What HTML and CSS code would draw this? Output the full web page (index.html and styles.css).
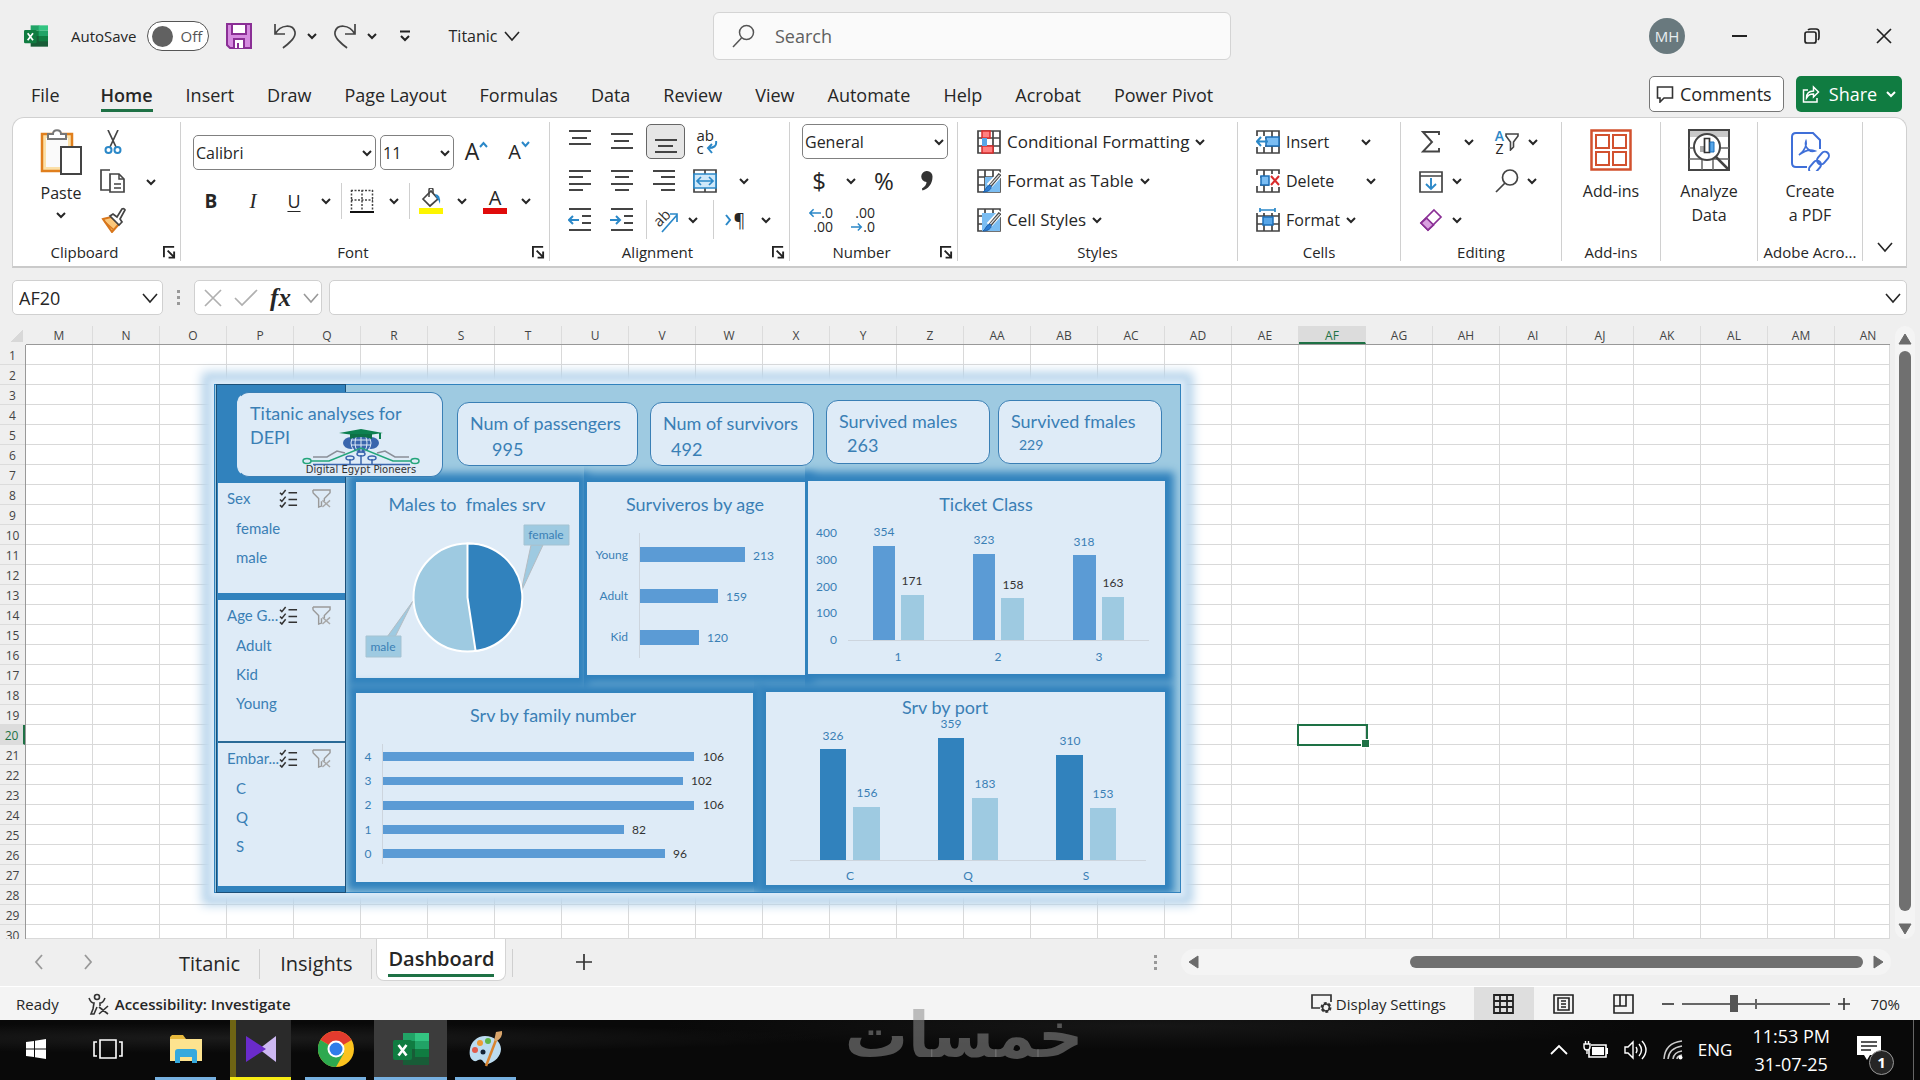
FILE: index.html
```html
<!DOCTYPE html>
<html lang="en">
<head>
<meta charset="utf-8">
<title>Titanic - Excel</title>
<link rel="stylesheet" href="styles.css">
</head>
<body>
<svg class="defs" aria-hidden="true">
  <symbol id="chev" viewBox="0 0 10 10"><path d="M1 3l4 4 4-4" fill="none" stroke="currentColor" stroke-width="2"/></symbol>
  <symbol id="chev-lg" viewBox="0 0 16 16"><path d="M1 4l7 8 7-8" fill="none" stroke="currentColor" stroke-width="1.600"/></symbol>
  <symbol id="launch" viewBox="0 0 14 14"><path d="M1 12V1h11M5 5l7 7M12 6v6.500H6" fill="none" stroke="#222" stroke-width="2"/></symbol>
  <symbol id="excel" viewBox="0 0 36 36">
    <path d="M10 2h13v8H10z" fill="#21a366"/><path d="M22 2h14v8H22z" fill="#33c481"/><path d="M10 10h13v8H10z" fill="#107c41"/><path d="M22 10h14v8H22z" fill="#21a366"/><path d="M10 18h26v16H10z" fill="#185c37"/><path d="M22 18h14v8H22z" fill="#107c41"/>
    <rect y="9" width="19" height="20" rx="2" fill="#107c41"/><path d="M5.500 14l8 10.500M13.500 14l-8 10.500" stroke="#fff" stroke-width="2.600"/>
  </symbol>
  <symbol id="multi" viewBox="0 0 20 20"><path d="M1 4l2 2 4-5M1 11l2 2 4-5M1 17l2 2 4-5M10 4h9M10 11h9M10 17h9" fill="none" stroke="#333" stroke-width="1.600"/></symbol>
  <symbol id="nofilter" viewBox="0 0 20 20"><path d="M1 1h18v3l-6 6v3M1 4l6 6v9l3-1v-5M1 1v3" fill="none" stroke="#9a9a9a" stroke-width="1.500"/><path d="M11 12l8 7M19 12l-8 7" stroke="#a8a8a8" stroke-width="1.500"/></symbol>
  <symbol id="gridico" viewBox="0 0 24 24"><path d="M1 1h22v22H1zM1 8h22M1 16h22M8 1v22M16 1v22" fill="#fff" stroke="#444" stroke-width="1.700"/></symbol>
  <symbol id="brushpen" viewBox="0 0 24 24"><path d="M24 4L12 17" stroke="#fff" stroke-width="6"/><path d="M23 5L13 17" stroke="#444" stroke-width="3.500"/><path d="M22.500 6L13 16.500" stroke="#ddd" stroke-width="1.200"/><path d="M13 16c3 2 0 7-7 7 3-2 3-6 7-7z" fill="#2b7cd3" stroke="#1c5fa8"/></symbol>
</svg>

<header class="titlebar">
  <div class="quick">
    <svg class="logo24" viewBox="0 0 36 36"><use href="#excel"/></svg>
    <label class="autosave"><span>AutoSave</span><input type="checkbox" class="switch-input"><span class="switch"><i></i>Off</span></label>
    <button class="plain save" aria-label="Save"><svg width="26" height="26" viewBox="0 0 26 26"><path d="M1 1h24v24H4l-3-3z" fill="#d68be0" stroke="#8a2f95" stroke-width="2"/><path d="M6 1h14v10H6zM8 25v-9h10v9" fill="#fff" stroke="#8a2f95" stroke-width="2"/><path d="M12 20v5" stroke="#8a2f95" stroke-width="2"/></svg></button>
    <button class="plain undo" aria-label="Undo"><svg width="24" height="26" viewBox="0 0 24 26"><path d="M2 1v10h10M2 11C8 1 20 1 22 9c1 6-6 11-12 16" fill="none" stroke="#444" stroke-width="1.700"/></svg></button>
    <button class="plain chv" aria-label="Undo list"><svg class="c"><use href="#chev"/></svg></button>
    <button class="plain undo" aria-label="Redo"><svg width="24" height="26" viewBox="0 0 24 26"><path d="M22 1v10H12M22 11C16 1 4 1 2 9c-1 6 6 11 12 16" fill="none" stroke="#444" stroke-width="1.700"/></svg></button>
    <button class="plain chv" aria-label="Redo list"><svg class="c"><use href="#chev"/></svg></button>
    <button class="plain custom" aria-label="Customize toolbar"><svg width="12" height="12" viewBox="0 0 12 12"><path d="M1 1.500h10M2 6l4 4 4-4" fill="none" stroke="#222" stroke-width="2"/></svg></button>
    <button class="plain doc">Titanic<svg class="cl"><use href="#chev-lg"/></svg></button>
  </div>
  <label class="search"><svg width="24" height="24" viewBox="0 0 24 24"><circle cx="14.500" cy="8.500" r="7" fill="none" stroke="#555" stroke-width="1.500"/><path d="M9.500 14L1 23" stroke="#555" stroke-width="1.500"/></svg><input type="text" placeholder="Search" aria-label="Search"></label>
  <div class="winctl">
    <span class="avatar">MH</span>
    <button class="plain" aria-label="Minimize"><svg width="18" height="18" viewBox="0 0 18 18"><path d="M1 9h15" stroke="#222" stroke-width="2"/></svg></button>
    <button class="plain" aria-label="Restore"><svg width="18" height="18" viewBox="0 0 18 18"><rect x="2" y="5" width="11" height="11" rx="2" fill="none" stroke="#222" stroke-width="1.700"/><path d="M5 3q1-1 3-1h5q3 0 3 3v5q0 2-1 3" fill="none" stroke="#222" stroke-width="1.700"/></svg></button>
    <button class="plain" aria-label="Close"><svg width="18" height="18" viewBox="0 0 18 18"><path d="M2 2l14 14M16 2L2 16" stroke="#222" stroke-width="1.700"/></svg></button>
  </div>
</header>

<nav class="tabs">
  <a href="#">File</a><a href="#" class="on">Home</a><a href="#">Insert</a><a href="#">Draw</a><a href="#">Page Layout</a><a href="#">Formulas</a><a href="#">Data</a><a href="#">Review</a><a href="#">View</a><a href="#">Automate</a><a href="#">Help</a><a href="#">Acrobat</a><a href="#">Power Pivot</a>
  <button class="comments"><svg width="18" height="18" viewBox="0 0 18 18"><path d="M1.500 2h15v11H8l-4 4v-4H1.500z" fill="none" stroke="#333" stroke-width="1.600"/></svg>Comments</button>
  <button class="share"><svg width="18" height="18" viewBox="0 0 18 18"><path d="M6 5H1.500v12H15v-4M4.500 13c0-5 2-7 7-7V2l5 5-5 5V9c-4 0-5 1-7 4z" fill="none" stroke="#fff" stroke-width="1.500"/></svg>Share<svg class="c"><use href="#chev"/></svg></button>
</nav>

<section class="ribbon">
  <div class="grp g-clip">
    <div class="body">
      <button class="plain paste"><svg width="42" height="46" viewBox="0 0 42 46"><path d="M2 5h30v37H2z" fill="#fbe0a8" stroke="#e07f1d" stroke-width="2.500"/><path d="M6 9h22v29H6z" fill="#fafafa"/><path d="M8 10V5h5c0-5 8-5 8 0h5v5z" fill="#fff" stroke="#777" stroke-width="2"/><path d="M21 18h20v27H21z" fill="#fff" stroke="#444" stroke-width="2"/></svg><span>Paste</span><svg class="c"><use href="#chev"/></svg></button>
      <div class="col">
        <button class="plain r" aria-label="Cut"><svg width="18" height="24" viewBox="0 0 18 24"><path d="M4 0l8 17M14 0L6 17" stroke="#444" stroke-width="1.700"/><g fill="none" stroke="#2b88c8" stroke-width="2"><circle cx="4.500" cy="20" r="3"/><circle cx="13.500" cy="20" r="3"/></g></svg></button>
        <button class="plain r" aria-label="Copy"><svg width="26" height="26" viewBox="0 0 26 26"><path d="M10 22H1V2h9" fill="none" stroke="#444" stroke-width="1.700"/><path d="M10 6h9l5 5v13H10z" fill="#fff" stroke="#444" stroke-width="1.700"/><path d="M19 6v5h5M14 16h7M14 20h7" fill="none" stroke="#444" stroke-width="1.500"/></svg></button>
        <button class="plain r" aria-label="Format Painter"><svg width="26" height="26" viewBox="0 0 26 26"><path d="M3 12l8-2 8 7-7 8z" fill="#fbc77a" stroke="#d8761b" stroke-width="2"/><path d="M5 15l9 8" stroke="#d8761b" stroke-width="1.500"/><path d="M10 9l3-2 4 3 5-8q2-1 3 1l-5 9 2 3-3 3z" fill="#fff" stroke="#444" stroke-width="1.700"/></svg></button>
      </div>
      <button class="plain chvmid" aria-label="Copy options"><svg class="c"><use href="#chev"/></svg></button>
    </div>
    <div class="lab">Clipboard<svg class="l"><use href="#launch"/></svg></div>
  </div>

  <div class="grp g-font">
    <div class="body stack">
      <div class="frow1">
        <label class="combo cf"><input type="text" value="Calibri" aria-label="Font"><svg class="c"><use href="#chev"/></svg></label>
        <label class="combo cs"><input type="text" value="11" aria-label="Font size"><svg class="c"><use href="#chev"/></svg></label>
        <button class="plain big">A<svg width="9" height="9" viewBox="0 0 9 9"><path d="M1 7l3.500-4L8 7" fill="none" stroke="#2b88c8" stroke-width="2"/></svg></button>
        <button class="plain big sm">A<svg width="9" height="9" viewBox="0 0 9 9"><path d="M1 2l3.500 4L8 2" fill="none" stroke="#2b88c8" stroke-width="2"/></svg></button>
      </div>
      <div class="frow2">
        <button class="plain b">B</button><button class="plain i">I</button><button class="plain u">U</button>
        <button class="plain" aria-label="Underline options"><svg class="c"><use href="#chev"/></svg></button><i class="vs"></i>
        <button class="plain" aria-label="Borders"><svg width="24" height="24" viewBox="0 0 24 24"><path d="M1 1.500h22M1.500 1v20M22.500 1v20M12 1v20M1 11h22" stroke="#444" stroke-width="1.500" stroke-dasharray="2 1.500" fill="none"/><path d="M0 23h24" stroke="#111" stroke-width="2"/></svg></button>
        <button class="plain" aria-label="Border options"><svg class="c"><use href="#chev"/></svg></button><i class="vs e"></i>
        <button class="plain" aria-label="Fill color"><svg width="24" height="26" viewBox="0 0 24 26"><path d="M4 11l8-8 7 8-8 7z" fill="#fff" stroke="#444" stroke-width="1.700"/><path d="M10 9V2q0-2 2-2t2 2v3" fill="none" stroke="#444" stroke-width="1.500"/><path d="M16 6q6 0 5 10-1-4-4-7z" fill="#2b88c8"/><path d="M0 20h24v6H0z" fill="#fdf500"/></svg></button>
        <button class="plain" aria-label="Fill options"><svg class="c"><use href="#chev"/></svg></button>
        <button class="plain fc">A</button>
        <button class="plain" aria-label="Font color options"><svg class="c"><use href="#chev"/></svg></button>
      </div>
    </div>
    <div class="lab">Font<svg class="l"><use href="#launch"/></svg></div>
  </div>

  <div class="grp g-align">
    <div class="body stack">
      <div class="row a1">
        <button class="plain" aria-label="Top align"><svg class="i24" viewBox="0 0 24 24"><path d="M1 1h22M4 8h15M1 14h22"/></svg></button>
        <button class="plain" aria-label="Middle align"><svg class="i24" viewBox="0 0 24 24"><path d="M1 4h22M4 11h15M1 18h22"/></svg></button>
        <button class="plain sel" aria-label="Bottom align"><svg class="i24" viewBox="0 0 24 24"><path d="M1 10h22M4 16h15M1 22h22"/></svg></button>
        <button class="plain wrap"><span>ab<br>c</span><svg width="12" height="14" viewBox="0 0 12 14"><path d="M10 0c1 5-2 7-8 7M6 3L2 7l4 5" fill="none" stroke="#2b88c8" stroke-width="2"/></svg></button>
      </div>
      <div class="row a2">
        <button class="plain" aria-label="Align left"><svg class="i24" viewBox="0 0 24 24"><path d="M1 2h22M1 8h14M1 15h22M1 21h14"/></svg></button>
        <button class="plain" aria-label="Center"><svg class="i24" viewBox="0 0 24 24"><path d="M1 2h22M5 8h14M1 15h22M5 21h14"/></svg></button>
        <button class="plain" aria-label="Align right"><svg class="i24" viewBox="0 0 24 24"><path d="M1 2h22M9 8h14M1 15h22M9 21h14"/></svg></button>
        <button class="plain" aria-label="Merge"><svg width="24" height="24" viewBox="0 0 24 24"><path d="M1 1h22v22H1z" fill="#fff" stroke="#444" stroke-width="1.700"/><path d="M12 1v22" stroke="#444" stroke-width="1.700"/><path d="M1 5h22v14H1z" fill="#cfe8f9" stroke="#2b88c8" stroke-width="1.700"/><path d="M4 12h16M8 8l-4 4 4 4M16 8l4 4-4 4" fill="none" stroke="#2b88c8" stroke-width="1.700"/></svg></button>
        <button class="plain" aria-label="Merge options"><svg class="c"><use href="#chev"/></svg></button>
      </div>
      <div class="row a3">
        <button class="plain" aria-label="Decrease indent"><svg class="i24" viewBox="0 0 24 24"><path d="M1 1h22M14 8h9M14 15h9M1 22h22"/><path class="bl" d="M1 12h10M5 8l-4 4 4 4"/></svg></button>
        <button class="plain" aria-label="Increase indent"><svg class="i24" viewBox="0 0 24 24"><path d="M1 1h22M14 8h9M14 15h9M1 22h22"/><path class="bl" d="M0 12h10M6 8l4 4-4 4"/></svg></button>
        <i class="vs e"></i>
        <button class="plain" aria-label="Orientation"><svg class="ori" width="26" height="26" viewBox="0 0 26 26"><text x="1" y="18" font-size="15" fill="#333" transform="rotate(-45 7 13)">ab</text><path d="M9 25L24 8M17 7h7v8" fill="none" stroke="#2b88c8" stroke-width="1.700"/></svg></button>
        <button class="plain" aria-label="Orientation options"><svg class="c"><use href="#chev"/></svg></button>
        <i class="vs e"></i>
        <button class="plain rtl"><svg width="7" height="12" viewBox="0 0 7 12"><path d="M1 1l4 5-4 5" fill="none" stroke="#2b88c8" stroke-width="2"/></svg>¶</button>
        <button class="plain" aria-label="Direction options"><svg class="c"><use href="#chev"/></svg></button>
      </div>
    </div>
    <div class="lab">Alignment<svg class="l"><use href="#launch"/></svg></div>
  </div>

  <div class="grp g-num">
    <div class="body stack">
      <div class="row n1"><label class="combo cn"><input type="text" value="General" aria-label="Number format"><svg class="c"><use href="#chev"/></svg></label></div>
      <div class="row n2"><button class="plain sym">$</button><button class="plain" aria-label="Currency options"><svg class="c"><use href="#chev"/></svg></button><button class="plain sym">%</button><button class="plain comma" aria-label="Comma style"><svg width="12" height="20" viewBox="0 0 12 20"><path d="M6 0a5.500 5.500 0 0 1 5.500 6C11.500 13 7 18 1.500 19.500 1 18.500 1 18 1 17.500c3-2 4.500-4 4.500-6.500A5.500 5.500 0 0 1 6 0z" fill="#333"/></svg></button></div>
      <div class="row n3">
        <button class="plain dec"><span><svg width="12" height="10" viewBox="0 0 13 10"><path d="M1 5h12M5 1L1 5l4 4" fill="none" stroke="#2b88c8" stroke-width="1.700"/></svg>.0</span><span>.00</span></button>
        <button class="plain dec"><span>.00</span><span><svg width="12" height="10" viewBox="0 0 14 10"><path d="M0 5h12M8 1l4 4-4 4" fill="none" stroke="#2b88c8" stroke-width="1.700"/></svg>.0</span></button>
      </div>
    </div>
    <div class="lab">Number<svg class="l"><use href="#launch"/></svg></div>
  </div>

  <div class="grp g-styles">
    <div class="body stack">
      <button class="plain row txt"><svg class="i24n" viewBox="0 0 24 24"><use href="#gridico"/><path d="M5 1h8v7H5zM5 16h11v7H5z" fill="#ff8080" stroke="#d92c2c" stroke-width="1.500"/><path d="M5 8h5v8H5z" fill="#58a6e8"/></svg>Conditional Formatting<svg class="c"><use href="#chev"/></svg></button>
      <button class="plain row txt"><svg class="i24n" viewBox="0 0 24 24"><use href="#gridico"/><path d="M8 8h15v15H8z" fill="#7bbdf2"/><use href="#brushpen"/></svg>Format as Table<svg class="c"><use href="#chev"/></svg></button>
      <button class="plain row txt"><svg class="i24n" viewBox="0 0 24 24"><use href="#gridico"/><path d="M5 5h18v18H5z" fill="#7bbdf2"/><use href="#brushpen"/></svg>Cell Styles<svg class="c"><use href="#chev"/></svg></button>
    </div>
    <div class="lab">Styles</div>
  </div>

  <div class="grp g-cells">
    <div class="body stack">
      <button class="plain row txt x1"><svg class="i24n" viewBox="0 0 24 24"><use href="#gridico"/><path d="M10 7h13v9H10z" fill="#7bbdf2" stroke="#1c6fb8" stroke-width="1.500"/><path d="M0 6h9v11H0z" fill="#fff"/><path d="M1 11.500h11M5 7l-4 4.500L5 16" fill="none" stroke="#2b88c8" stroke-width="2"/></svg>Insert<svg class="c"><use href="#chev"/></svg></button>
      <button class="plain row txt x2"><svg class="i24n" viewBox="0 0 24 24"><use href="#gridico"/><path d="M0 6h4v11H0zM13 5h11v13H13z" fill="#fff"/><path d="M5 7h8v9H5z" fill="#7bbdf2" stroke="#1c6fb8" stroke-width="1.500"/><path d="M15 7l8 9M23 7l-8 9" stroke="#d92c2c" stroke-width="2"/></svg>Delete<svg class="c"><use href="#chev"/></svg></button>
      <button class="plain row txt"><svg class="i24n" viewBox="0 0 24 24"><use href="#gridico"/><path d="M0 0h24v5H0z" fill="#fff"/><path d="M7 9h10v8H7z" fill="#58a6e8" stroke="#1c6fb8" stroke-width="1.500"/><path d="M4 2h15M4 0v4M19 0v4" stroke="#2b88c8" stroke-width="1.700"/></svg>Format<svg class="c"><use href="#chev"/></svg></button>
    </div>
    <div class="lab">Cells</div>
  </div>

  <div class="grp g-edit">
    <div class="body stack">
      <div class="row e1"><button class="plain" aria-label="AutoSum"><svg width="20" height="24" viewBox="0 0 20 24"><path d="M18 5V2H2l9 10L2 21.500h16V18" fill="none" stroke="#444" stroke-width="1.900"/></svg></button><button class="plain" aria-label="AutoSum options"><svg class="c"><use href="#chev"/></svg></button><button class="plain az"><span><b>A</b><br>Z</span><svg width="14" height="18" viewBox="0 0 14 18"><path d="M1 1h12v2L8.500 9v5L5.500 17V9L1 3z" fill="none" stroke="#444" stroke-width="1.600"/></svg></button><button class="plain" aria-label="Sort options"><svg class="c"><use href="#chev"/></svg></button></div>
      <div class="row e2"><button class="plain" aria-label="Fill"><svg width="24" height="24" viewBox="0 0 24 24"><path d="M1 3h22v20H1zM1 7h22" fill="#fff" stroke="#444" stroke-width="1.700"/><path d="M12 9v11M7 15l5 5 5-5" fill="none" stroke="#2b88c8" stroke-width="1.900"/></svg></button><button class="plain" aria-label="Fill options"><svg class="c"><use href="#chev"/></svg></button><button class="plain find" aria-label="Find"><svg width="24" height="24" viewBox="0 0 24 24"><circle cx="15" cy="8.500" r="7.500" fill="none" stroke="#444" stroke-width="1.700"/><path d="M10 14L1 23" stroke="#444" stroke-width="1.700"/></svg></button><button class="plain" aria-label="Find options"><svg class="c"><use href="#chev"/></svg></button></div>
      <div class="row e2"><button class="plain" aria-label="Clear"><svg width="24" height="24" viewBox="0 0 24 24"><path d="M15 2l7 7L9 22l-7-7z" fill="#fff" stroke="#8a2f95" stroke-width="1.700"/><path d="M7.500 10l7 7L9 22l-7-7z" fill="#d9a0e0" stroke="#8a2f95" stroke-width="1.700"/></svg></button><button class="plain" aria-label="Clear options"><svg class="c"><use href="#chev"/></svg></button></div>
    </div>
    <div class="lab">Editing</div>
  </div>

  <div class="grp g-add">
    <div class="body"><button class="plain tall"><svg width="42" height="42" viewBox="0 0 42 42"><g fill="#fff" stroke="#d2512e" stroke-width="2.500"><path d="M1.500 1.500h39v39h-39z"/><path d="M6 6h13v13H6zM23 6h13v13H23zM6 23h13v13H6zM23 23h13v13H23z" stroke-width="2"/></g></svg><span>Add-ins</span></button></div>
    <div class="lab">Add-ins</div>
  </div>
  <div class="grp g-ana">
    <div class="body"><button class="plain tall"><svg width="42" height="42" viewBox="0 0 42 42"><path d="M1 1h40v40H1z" fill="#fff" stroke="#444" stroke-width="2"/><path d="M2 2h38v6H2z" fill="#c8c8c8"/><path d="M1 19h40M1 30h40M14 30v11M25 30v11" stroke="#666" stroke-width="1.500"/><circle cx="19" cy="18" r="13" fill="#fff" stroke="#444" stroke-width="2"/><path d="M28 28l13 13" stroke="#444" stroke-width="2.500"/><path d="M12 17h4v6h-4z" fill="#aaa"/><path d="M16.500 9.500h5v14h-5z" fill="#fff" stroke="#333" stroke-width="1.700"/><path d="M22 13h4v10h-4z" fill="#58a6e8" stroke="#1c6fb8"/></svg><span>Analyze<br>Data</span></button></div>
  </div>
  <div class="grp g-pdf">
    <div class="body"><button class="plain tall"><svg width="42" height="42" viewBox="0 0 42 42"><path d="M18 38H7q-4 0-4-4V8q0-4 4-4h17l7 7v9" fill="none" stroke="#3f6fd8" stroke-width="2"/><path d="M10 26c6-4 8-11 7-14-2 5 3 12 9 10-5-2-11 0-16 4z" fill="none" stroke="#3f6fd8" stroke-width="1.600"/><g fill="none" stroke="#3f6fd8" stroke-width="2"><rect x="27" y="25" width="14" height="8" rx="4" transform="rotate(-50 34 29)"/><rect x="19" y="34" width="14" height="8" rx="4" transform="rotate(-50 26 38)"/></g></svg><span>Create<br>a PDF</span></button></div>
    <div class="lab">Adobe Acro...</div>
  </div>
  <button class="plain collapse" aria-label="Collapse ribbon"><svg class="cl"><use href="#chev-lg"/></svg></button>
</section>

<section class="formula">
  <label class="namebox"><input type="text" value="AF20" aria-label="Name box"><svg class="cl"><use href="#chev-lg"/></svg></label>
  <span class="dots"><i></i><i></i><i></i></span>
  <div class="fxbox">
    <button class="plain" aria-label="Cancel"><svg width="18" height="18" viewBox="0 0 18 18"><path d="M1 1l16 16M17 1L1 17" stroke="#b0b0b0" stroke-width="1.700"/></svg></button>
    <button class="plain" aria-label="Enter"><svg width="24" height="18" viewBox="0 0 24 18"><path d="M1 9l7 7L23 1" fill="none" stroke="#b0b0b0" stroke-width="1.700"/></svg></button>
    <button class="plain fx">fx</button>
    <button class="plain g" aria-label="Function list"><svg class="cl"><use href="#chev-lg"/></svg></button>
  </div>
  <label class="fbar"><input type="text" aria-label="Formula bar"><svg class="cl"><use href="#chev-lg"/></svg></label>
</section>

<main class="sheet">
  <div class="corner"></div>
  <div class="cols"><span>M</span><span>N</span><span>O</span><span>P</span><span>Q</span><span>R</span><span>S</span><span>T</span><span>U</span><span>V</span><span>W</span><span>X</span><span>Y</span><span>Z</span><span>AA</span><span>AB</span><span>AC</span><span>AD</span><span>AE</span><span class="on">AF</span><span>AG</span><span>AH</span><span>AI</span><span>AJ</span><span>AK</span><span>AL</span><span>AM</span><span>AN</span></div>
  <div class="vscroll"><svg width="14" height="12" viewBox="0 0 14 12"><path d="M7 1l6 10H1z" fill="#6b6b6b" stroke="#6b6b6b" stroke-linejoin="round"/></svg><i></i><svg width="14" height="12" viewBox="0 0 14 12"><path d="M7 11L1 1h12z" fill="#6b6b6b" stroke="#6b6b6b" stroke-linejoin="round"/></svg></div>
  <div class="rows"><span>1</span><span>2</span><span>3</span><span>4</span><span>5</span><span>6</span><span>7</span><span>8</span><span>9</span><span>10</span><span>11</span><span>12</span><span>13</span><span>14</span><span>15</span><span>16</span><span>17</span><span>18</span><span>19</span><span class="on">20</span><span>21</span><span>22</span><span>23</span><span>24</span><span>25</span><span>26</span><span>27</span><span>28</span><span>29</span><span>30</span></div>
  <div class="cells">
    <div class="active"></div>
    <div class="dash">
      <aside class="side">
        <div class="slicer s1"><div class="sh"><span>Sex</span><svg><use href="#multi"/></svg><svg><use href="#nofilter"/></svg></div><button class="plain">female</button><button class="plain">male</button></div>
        <div class="slicer s2"><div class="sh"><span>Age G...</span><svg><use href="#multi"/></svg><svg><use href="#nofilter"/></svg></div><button class="plain">Adult</button><button class="plain">Kid</button><button class="plain">Young</button></div>
        <div class="slicer s3"><div class="sh"><span>Embar...</span><svg><use href="#multi"/></svg><svg><use href="#nofilter"/></svg></div><button class="plain">C</button><button class="plain">Q</button><button class="plain">S</button></div>
      </aside>
      <div class="main">
        <div class="crow">
          <svg class="chart" width="223" height="196" viewBox="356 482 223 196">
            <text class="t" x="467" y="511">Males to&#160; fmales srv</text>
            <path d="M531 545h12l-22 47zM387 637h8l18-36z" fill="#9ecae1" stroke="#b4bcc2"/>
            <circle cx="467.500" cy="597.500" r="54" fill="#9ecae1" stroke="#fff" stroke-width="2"/>
            <path d="M467.500 597.500V543.500A54 54 0 0 1 475.600 651z" fill="#3182bd" stroke="#fff" stroke-width="2"/>
            <path d="M524 525h45v20h-45zM366 636h35v21h-35z" fill="#9ecae1" stroke="#a5c3d2"/>
            <text x="546" y="539">female</text><text x="383" y="651">male</text>
          </svg>
          <svg class="chart" width="218" height="193" viewBox="587 482 218 193">
            <text class="t" x="695" y="511">Surviveros by age</text>
            <path d="M639.500 533v125" stroke="#cdd5de"/>
            <path d="M640 547h105v15H640zM640 589h78v14h-78zM640 630h59v15h-59z" fill="#5b9bd5"/>
            <text class="e" x="628" y="559">Young</text><text class="e" x="628" y="600">Adult</text><text class="e" x="628" y="641">Kid</text>
            <text class="s" x="753" y="560">213</text><text class="s" x="726" y="601">159</text><text class="s" x="707" y="642">120</text>
          </svg>
          <svg class="chart last" width="357" height="193" viewBox="808 481 357 193">
            <text class="t" x="986" y="511">Ticket Class</text>
            <path d="M848 640.500h301" stroke="#cdd5de"/>
            <path d="M873 546h22v94h-22zM973 554h22v86h-22zM1073 555h23v85h-23z" fill="#5b9bd5"/>
            <path d="M901 595h23v45h-23zM1001 598h23v42h-23zM1102 597h22v43h-22z" fill="#9ecae1"/>
            <text class="e" x="837" y="537">400</text><text class="e" x="837" y="564">300</text><text class="e" x="837" y="591">200</text><text class="e" x="837" y="617">100</text><text class="e" x="837" y="644">0</text>
            <text x="884" y="536">354</text><text x="984" y="544">323</text><text x="1084" y="546">318</text>
            <text class="k" x="912" y="585">171</text><text class="k" x="1013" y="589">158</text><text class="k" x="1113" y="587">163</text>
            <text x="898" y="661">1</text><text x="998" y="661">2</text><text x="1099" y="661">3</text>
          </svg>
        </div>
        <div class="crow c2">
          <svg class="chart" width="397" height="189" viewBox="356 693 397 189">
            <text class="t" x="553" y="722">Srv by family number</text>
            <path d="M382.500 744v120" stroke="#cdd5de"/>
            <path d="M383 752h311v9H383zM383 777h300v8H383zM383 801h311v9H383zM383 825h241v9H383zM383 849h282v9H383z" fill="#5b9bd5"/>
            <text x="368" y="761">4</text><text x="368" y="785">3</text><text x="368" y="809">2</text><text x="368" y="834">1</text><text x="368" y="858">0</text>
            <text class="s k" x="703" y="761">106</text><text class="s k" x="691" y="785">102</text><text class="s k" x="703" y="809">106</text><text class="s k" x="632" y="834">82</text><text class="s k" x="673" y="858">96</text>
          </svg>
          <svg class="chart last" width="399" height="193" viewBox="766 692 399 193">
            <text class="t" x="945" y="714">Srv by port</text>
            <path d="M790 860.500h356" stroke="#cdd5de"/>
            <path d="M820 749h26v111h-26zM938 738h26v122h-26zM1056 755h27v105h-27z" fill="#3182bd"/>
            <path d="M853 807h27v53h-27zM972 798h26v62h-26zM1090 808h26v52h-26z" fill="#9ecae1"/>
            <text x="833" y="740">326</text><text x="951" y="728">359</text><text x="1070" y="745">310</text>
            <text x="867" y="797">156</text><text x="985" y="788">183</text><text x="1103" y="798">153</text>
            <text x="850" y="880">C</text><text x="968" y="880">Q</text><text x="1086" y="880">S</text>
          </svg>
        </div>
      </div>
      <div class="cards">
        <div class="card head"><p>Titanic analyses for DEPI</p>
          <svg width="120" height="46" viewBox="0 0 120 46">
            <g fill="#3a66ad"><ellipse cx="50" cy="14" rx="8" ry="6"/><ellipse cx="70" cy="14" rx="8" ry="6"/><circle cx="60" cy="14" r="10" stroke="#dce9f6"/></g>
            <path d="M60 5v18M51 11h18M50 16h20M56 6q-4 8 0 16M64 6q4 8 0 16" fill="none" stroke="#dce9f6"/>
            <path d="M38 4l22-4 22 4-22 3z" fill="#0d8050"/><path d="M49 5v5q11-4 22 0V5" fill="#0d7046"/><path d="M79 4v6" stroke="#0d8050" stroke-width="2"/>
            <g fill="none" stroke-width="1.500"><path d="M10 32h18L60 19l32 13h18" stroke="#24a57b"/><path d="M12 28h14l10-6 8 2M108 28H94l-10-6-8 2" stroke="#8a8f98"/><ellipse cx="6" cy="32" rx="4" ry="2.500" stroke="#24a57b"/><ellipse cx="114" cy="32" rx="4" ry="2.500" stroke="#24a57b"/><path d="M49 36v-6M60 36V26M71 36v-6M12 35.500h97" stroke="#3a66ad"/><g stroke="#3a66ad"><ellipse cx="60" cy="25" rx="4" ry="2"/><ellipse cx="49" cy="29" rx="4" ry="2"/><ellipse cx="71" cy="29" rx="4" ry="2"/></g></g>
            <text class="depi" x="60" y="44">Digital Egypt Pioneers</text>
          </svg></div>
        <div class="card k1"><span>Num of passengers</span><b>995</b></div>
        <div class="card k2"><span>Num of survivors</span><b>492</b></div>
        <div class="card k3"><span>Survived males</span><b>263</b></div>
        <div class="card k4"><span>Survived fmales</span><b>229</b></div>
      </div>
    </div>
  </div>
</main>

<nav class="sheettabs">
  <button class="plain nav" aria-label="Previous sheet"><svg width="10" height="16" viewBox="0 0 10 16"><path d="M8 1L2 8l6 7" fill="none" stroke="#999" stroke-width="1.800"/></svg></button>
  <button class="plain nav" aria-label="Next sheet"><svg width="10" height="16" viewBox="0 0 10 16"><path d="M2 1l6 7-6 7" fill="none" stroke="#999" stroke-width="1.800"/></svg></button>
  <a href="#" class="st first">Titanic</a><a href="#" class="st">Insights</a><a href="#" class="cur"><span>Dashboard</span></a><i class="vs"></i>
  <button class="plain add" aria-label="New sheet"><svg width="18" height="18" viewBox="0 0 18 18"><path d="M9 1v16M1 9h16" stroke="#333" stroke-width="1.700"/></svg></button>
  <span class="dots"><i></i><i></i><i></i></span>
  <div class="hscroll"><svg width="11" height="16" viewBox="0 0 11 16"><path d="M1 8l9-6v12z" fill="#6b6b6b" stroke="#6b6b6b" stroke-linejoin="round"/></svg><i></i><svg width="11" height="16" viewBox="0 0 11 16"><path d="M10 8L1 2v12z" fill="#6b6b6b" stroke="#6b6b6b" stroke-linejoin="round"/></svg></div>
</nav>

<footer class="status">
  <span class="ready">Ready</span>
  <button class="plain acc"><svg width="22" height="22" viewBox="0 0 22 22"><g fill="none" stroke="#333" stroke-width="1.600"><circle cx="9" cy="4" r="2.500"/><path d="M1 5q2 5 5 5l-1 6-2 5h3l3-7M17 5q-2 5-5 5v3M11 14l9 7M20 13l-9 8"/></g></svg>Accessibility: Investigate</button>
  <button class="plain disp"><svg width="22" height="20" viewBox="0 0 22 20"><path d="M9 14H1V1h19v7" fill="none" stroke="#333" stroke-width="1.700"/><circle cx="15" cy="13.500" r="4" fill="none" stroke="#333" stroke-width="3" stroke-dasharray="2.500 1.600"/><circle cx="15" cy="13.500" r="3.500" fill="none" stroke="#333" stroke-width="1.600"/></svg>Display Settings</button>
  <button class="plain view on" aria-label="Normal"><svg width="22" height="20" viewBox="0 0 22 20"><path d="M1 1h19v18H1zM1 7h19M1 13h19M7 1v18M14 1v18" fill="none" stroke="#222" stroke-width="1.800"/></svg></button>
  <button class="plain view" aria-label="Page layout"><svg width="22" height="20" viewBox="0 0 22 20"><path d="M1 1h19v18H1zM5 4h11v12H5zM8 7h5M8 10h5M8 13h5" fill="none" stroke="#222" stroke-width="1.600"/></svg></button>
  <button class="plain view" aria-label="Page break preview"><svg width="22" height="20" viewBox="0 0 22 20"><path d="M1 1h19v18H1zM1 12h12V1M7 1v11" fill="none" stroke="#222" stroke-width="1.600"/></svg></button>
  <button class="plain zm" aria-label="Zoom out"><svg width="12" height="12" viewBox="0 0 12 12"><path d="M0 6h12" stroke="#333" stroke-width="1.600"/></svg></button>
  <input type="range" class="zoom" min="10" max="190" value="72" aria-label="Zoom">
  <button class="plain zm" aria-label="Zoom in"><svg width="12" height="12" viewBox="0 0 12 12"><path d="M0 6h12M6 0v12" stroke="#333" stroke-width="1.600"/></svg></button>
  <span class="pct">70%</span>
</footer>

<footer class="taskbar">
  <button class="tb nb" aria-label="Start"><svg width="20" height="20" viewBox="0 0 20 20"><path d="M0 3l8-1v7.500H0zM9 1.800L20 0v9.500H9zM0 10.500h8V18l-8-1zM9 10.500h11V20L9 18.200z" fill="#fff"/></svg></button>
  <button class="tb nb tv" aria-label="Task view"><svg width="30" height="20" viewBox="0 0 30 20"><path d="M7 1h16v18H7zM4 3H1v14h3M26 3h3v14h-3" fill="none" stroke="#fff" stroke-width="1.600"/></svg></button>
  <button class="tb" aria-label="File Explorer"><svg width="34" height="30" viewBox="0 0 34 30"><path d="M1 3l2-2h11l3 4H1z" fill="#e8b93c"/><path d="M1 5h32v22H1z" fill="#fde38f"/><path d="M6 29V18q0-3 3-3h16q3 0 3 3v11h-5v-6H11v6z" fill="#35a9dd"/></svg></button>
  <button class="tb km" aria-label="KMPlayer"><svg width="32" height="28" viewBox="0 0 32 28"><path d="M31 1v26L14 14z" fill="#cdb8f2"/><path d="M1 1l20 13L1 27z" fill="#6a2bcb"/></svg></button>
  <button class="tb" aria-label="Chrome"><svg width="36" height="36" viewBox="0 0 36 36"><circle cx="18" cy="18" r="18" fill="#fcc31e"/><path d="M18 18L2.400 9A18 18 0 0 1 33.600 9z" fill="#e33b2e"/><path d="M18 18L2.400 9A18 18 0 0 0 18 36l8-14z" fill="#2da94f"/><circle cx="18" cy="18" r="8.500" fill="#fff"/><circle cx="18" cy="18" r="6.500" fill="#2f7de9"/></svg></button>
  <button class="tb xl" aria-label="Excel"><svg width="36" height="36" viewBox="0 0 36 36"><use href="#excel"/></svg></button>
  <button class="tb" aria-label="Paint"><svg width="36" height="36" viewBox="0 0 36 36"><path d="M17 5c9 0 16 6 16 13s-6 13-13 15c-3 1-4-2-6-4-3-2-5 2-8 1C2 28 1 23 2 18 3 11 9 5 17 5z" fill="#bcdcf0"/><circle cx="7" cy="19" r="3" fill="#e25c4b"/><circle cx="12" cy="12" r="3" fill="#ef9a33"/><circle cx="20" cy="10" r="3" fill="#5eb548"/><circle cx="15" cy="21" r="2.500" fill="#142436"/><path d="M18 35L28 9" stroke="#d9842f" stroke-width="2.500"/><path d="M26 10l2-9 6-1q1 6-5 10z" fill="#d9a56b"/></svg></button>
  <div class="tray">
    <svg width="18" height="12" viewBox="0 0 18 12"><path d="M1 10l8-8 8 8" fill="none" stroke="#fff" stroke-width="1.800"/></svg>
    <svg width="26" height="18" viewBox="0 0 26 18"><path d="M8 4h15v12H6V9" fill="none" stroke="#fff" stroke-width="1.600"/><path d="M9 6h12v8H9zM23 7h2v6h-2z" fill="#fff"/><path d="M1 3h6v3q0 3-3 3t-3-3zM2.500 0v3M5.500 0v3M4 9v4" fill="none" stroke="#fff" stroke-width="1.400"/></svg>
    <svg width="24" height="20" viewBox="0 0 24 20"><path d="M1 7h3l5-5v16l-5-5H1zM12 7q2 3 0 6M15 4q5 6 0 12M18 1q8 9 0 18" fill="none" stroke="#fff" stroke-width="1.400"/></svg>
    <svg width="20" height="20" viewBox="0 0 20 20"><path d="M1 19Q2 3 19 1M5 19Q6 8 19 6M10 19q1-7 9-8M14 19q0-3 5-4" fill="none" stroke="#ccc" stroke-width="1.500"/><circle cx="17.500" cy="17.500" r="2" fill="#fff"/></svg>
    <span class="eng">ENG</span>
    <time>11:53 PM<br>31-07-25</time>
    <button class="plain note" aria-label="Notifications"><svg width="26" height="26" viewBox="0 0 26 26"><path d="M1 1h24v19H14l-3 5-3-5H1z" fill="#fff"/><path d="M5 7h16M5 11h16M5 15h10" stroke="#222" stroke-width="1.600"/></svg><b>1</b></button>
  </div>
  <span class="mark" lang="ar">خمسات</span>
</footer>
</body>
</html>
```
FILE: styles.css
```css
* { box-sizing: border-box; }
body { margin: 0; height: 100vh; display: flex; flex-direction: column; overflow: hidden; background: #efefef; color: #262626; font: 16px/20px "Open Sans", "Noto Sans", sans-serif; }
.defs { position: absolute; width: 0; height: 0; }
svg { display: block; flex: none; }
.c { width: 10px; height: 10px; }
.cl { width: 16px; height: 16px; }
a { color: inherit; text-decoration: none; }
input { font: inherit; color: inherit; border: 0; background: none; outline: 0; padding: 0; min-width: 0; }
button { font: inherit; color: inherit; }
.plain { border: 0; background: none; padding: 0; display: flex; align-items: center; justify-content: center; }
.vs { width: 1px; background: #cfcfcf; align-self: stretch; }

/* Title bar */
.titlebar { height: 72px; flex: none; display: grid; grid-template-columns: 713px 27% 1fr; align-items: center; }
.quick { display: flex; align-items: center; padding-left: 24px; font-size: 15px; }
.logo24 { width: 24px; height: 24px; margin-right: 23px; }
.autosave { display: flex; align-items: center; gap: 10px; }
.switch-input { position: absolute; opacity: 0; }
.switch { width: 62px; height: 30px; border: 1px solid #555; border-radius: 15px; background: #fff; display: flex; align-items: center; gap: 8px; padding-left: 4px; color: #555; }
.switch i { width: 21px; height: 21px; border-radius: 50%; background: #616161; }
.save { margin-left: 17px; }
.undo { margin-left: 21px; }
.chv { margin-left: 10px; }
.chv + .undo { margin-left: 16px; }
.custom { margin-left: 22px; }
.doc { margin-left: 38px; gap: 6px; font-size: 16px; }
.search { height: 48px; border: 1px solid #d4d4d4; border-radius: 6px; background: #fafafa; display: flex; align-items: center; gap: 19px; padding-left: 18px; font-size: 18px; }
.search input { flex: 1; }
.search input::placeholder { color: #606060; opacity: 1; }
.winctl { display: flex; justify-content: flex-end; align-items: center; padding-right: 27px; gap: 54px; }
.avatar { width: 36px; height: 36px; border-radius: 50%; background: #69797e; color: #e8eef0; font-size: 15px; line-height: 36px; text-align: center; margin-right: -8px; }

/* Ribbon tabs */
.tabs { height: 45px; flex: none; display: flex; align-items: center; gap: 33px; padding: 2px 18px 0 31px; font-size: 18px; }
.tabs a { line-height: 24px; padding: 4px 0 2px; border-bottom: 3px solid transparent; white-space: nowrap; }
.tabs .on { font-weight: 600; border-color: #1e7145; margin-left: 8px; }
.comments, .share { height: 36px; border-radius: 5px; display: flex; align-items: center; gap: 6px; font-size: 18px; padding: 0 6px; margin-top: -3px; }
.comments { margin-left: auto; border: 1px solid #777; background: #fff; width: 135px; }
.share { border: 0; background: #107c41; color: #fff; width: 106px; margin-left: -21px; justify-content: space-between; }

/* Ribbon */
.ribbon { height: 151px; flex: none; margin: 0 13px 0 12px; background: #fff; border: 1px solid #d0d0d0; border-bottom: 2px solid #cacaca; border-radius: 12px 12px 0 0; display: flex; padding: 4px 0 5px; }
.grp { display: flex; flex-direction: column; border-right: 1px solid #d0d0d0; flex: none; }
.body { display: flex; height: 120px; flex: none; }
.stack { flex-direction: column; }
.row { height: 39px; display: grid; align-items: center; }
.lab { font-size: 15px; line-height: 20px; text-align: center; position: relative; white-space: nowrap; }
.l { position: absolute; right: 4px; top: 4px; width: 13px; height: 13px; }
.g-clip { width: 168px; } .g-font { width: 369px; } .g-align { width: 240px; } .g-num { width: 168px; } .g-styles { width: 280px; }
.g-cells { width: 163px; } .g-edit { width: 161px; } .g-add { width: 99px; } .g-ana { width: 97px; } .g-pdf { width: 105px; }
.g-clip .lab, .g-font .lab, .g-align .lab, .g-num .lab { padding-right: 24px; }
.paste { flex-direction: column; justify-content: flex-start; width: 64px; margin-left: 16px; padding-top: 7px; }
.paste span { margin: 8px 0 7px; }
.col { width: 40px; }
.r { height: 39px; width: 40px; }
.chvmid { width: 36px; }
.combo { display: flex; align-items: center; height: 35px; border: 1px solid #808080; border-radius: 5px; padding: 0 3px 0 2px; background: #fff; }
.combo input { flex: 1; width: 10px; }
.frow1 { display: flex; gap: 4px; padding: 13px 0 0 12px; }
.cf { width: 183px; } .cs { width: 74px; }
.big { font-size: 23px; width: 37px; align-items: flex-start; line-height: 32px; }
.big svg { margin-top: 5px; }
.sm { font-size: 20px; line-height: 34px; width: 40px; }
.frow2 { display: grid; height: 36px; margin-top: 13px; padding-left: 12px; grid-template-columns: 36px 48px 34px 30px 1px 40px 24px 4px 42px 20px 46px 16px; align-items: center; }
.e { margin-left: 3px; }
.b { font-weight: 700; font-size: 19px; }
.i { font: italic 21px "Liberation Serif", serif; }
.u { font-size: 18px; text-decoration: underline; text-underline-offset: 3px; }
.fc { font-size: 20px; line-height: 20px; height: 26px; width: 24px; border-bottom: 6px solid #e00b0b; justify-self: center; }
.i24 { width: 24px; height: 24px; fill: none; stroke: #444; stroke-width: 2; }
.i24 .bl { stroke: #2b88c8; }
.i24n { width: 24px; height: 24px; }
.g-align .row { padding-left: 9px; }
.a1 { grid-template-columns: 42px 42px 44px 40px; }
.a2 { grid-template-columns: 42px 42px 42px 40px 38px; }
.a3 { grid-template-columns: 42px 42px 4px 38px 16px 13px 42px 20px; }
.a3 .vs:nth-of-type(2) { margin-left: 12px; }
.ori { overflow: visible; }
.sel { height: 35px; width: 39px; background: #e6e6e6; border: 1px solid #666; border-radius: 5px; margin-left: 3px; }
.wrap { font-size: 15px; line-height: 13px; align-items: flex-end; text-align: left; }
.wrap span { width: 9px; }
.rtl { gap: 2px; font-size: 18px; }
.n1 { padding-left: 12px; }
.cn { width: 146px; }
.n2 { grid-template-columns: 34px 30px 36px 50px; padding-left: 12px; }
.n3 { grid-template-columns: 42px 42px; padding-left: 9px; }
.sym { font-size: 24px; }
.dec { flex-direction: column; align-items: flex-end; padding-right: 8px; font-size: 14px; line-height: 14px; }
.dec span { display: flex; align-items: center; }
.txt { display: flex; justify-content: flex-start; gap: 6px; padding-left: 19px; white-space: nowrap; font-size: 17px; }
.g-cells .txt { font-size: 16px; padding-left: 18px; }
.x1 .c { margin-left: 26px; } .x2 .c { margin-left: 26px; }
.g-edit .row { padding-left: 11px; }
.e1 { grid-template-columns: 38px 38px 38px 14px; }
.e2 { grid-template-columns: 38px 14px 55px 26px; justify-items: center; }
.find { justify-self: end; }
.az { gap: 1px; font-size: 14px; line-height: 13px; }
.az b { color: #2b88c8; font-weight: 600; }
.tall { width: 100%; flex-direction: column; justify-content: flex-start; padding-top: 7px; gap: 8px; line-height: 24px; }
.collapse { flex: 1; align-items: flex-end; padding-bottom: 6px; }

/* Formula bar */
.formula { display: flex; flex: none; height: 58px; padding: 12px 13px 11px 12px; font-size: 18px; }
.namebox, .fxbox, .fbar { background: #fff; border: 1px solid #d0d0d0; border-radius: 5px; display: flex; align-items: center; }
.namebox { width: 151px; padding: 0 4px 0 6px; }
.namebox input { flex: 1; width: 10px; }
.dots { display: flex; flex-direction: column; justify-content: center; gap: 3px; width: 31px; align-items: center; }
.dots i { width: 3px; height: 3px; background: #999; }
.fxbox { width: 128px; padding: 0 2px 0 9px; justify-content: space-between; }
.fx { font: italic bold 25px/26px "Liberation Serif", serif; }
.g { color: #999; }
.fbar { flex: 1; margin-left: 7px; padding-right: 5px; }
.fbar input { flex: 1; }

/* Worksheet */
.sheet { flex: 1; min-height: 0; display: grid; grid-template: 19px 1fr / 26px 1fr 30px; overflow: hidden; font-size: 12px; color: #444; }
.corner { background: linear-gradient(135deg, transparent 50%, #d8d8d8 50%); margin: 4px 3px 3px 9px; }
.cols { display: flex; overflow: hidden; border-bottom: 1px solid #999; }
.cols span { flex: none; width: 67px; text-align: center; line-height: 20px; border-right: 1px solid #dcdcdc; }
.cols .on { background: #dcdcdc; color: #1e7145; border-bottom: 2px solid #1e7145; }
.rows { overflow: hidden; border-right: 1px solid #999; }
.rows span { display: block; height: 20px; line-height: 21px; text-align: center; border-bottom: 1px solid #dcdcdc; }
.rows .on { background: #dcdcdc; color: #1e7145; border-right: 2px solid #1e7145; }
.cells { position: relative; overflow: hidden; border: solid #d9d9d9; border-width: 0 1px 1px 0; background: linear-gradient(to left, #d9d9d9 1px, transparent 1px) 0 0 / 67px 20px, linear-gradient(to top, #d9d9d9 1px, #fff 1px) 0 0 / 67px 20px; }
.vscroll { grid-row: 1 / 3; grid-column: 3; display: flex; flex-direction: column; align-items: center; gap: 6px; padding: 7px 0 4px; background: #f4f4f4; margin: 0 5px; border-radius: 10px; }
.vscroll i { flex: 1; width: 12px; border-radius: 6px; background: #707070; margin-bottom: 6px; }
.active { position: absolute; left: 1271px; top: 379px; width: 71px; height: 22px; border: 2px solid #1e7145; }
.active::after { content: ""; position: absolute; right: -4px; bottom: -4px; width: 7px; height: 7px; background: #1e7145; border: 1px solid #fff; }

/* Dashboard group floating over the cells */
.dash { position: absolute; left: 188px; top: 39px; width: 967px; height: 509px; display: grid; grid-template-columns: 131px 1fr; background: #9ecae1; border: 1px solid #3182bd; box-shadow: 0 0 6px 5px #dcebf8, 0 0 10px 12px #b4d2ea; font-family: Lato, "Open Sans", sans-serif; color: #3a7fb5; }
.side { grid-area: 1 / 1; background: #3182bd; border: 1px solid #1b4f78; margin: -1px 0 -1px 1px; padding: 98px 0 6px 1px; display: flex; flex-direction: column; z-index: 2; }
.slicer { background: #deebf7; padding-left: 18px; font-size: 15px; }
.slicer .plain { height: 29px; }
.sh { display: flex; align-items: center; height: 30px; margin-left: -9px; }
.sh span { width: 54px; white-space: nowrap; }
.sh svg { width: 19px; height: 19px; margin-right: 14px; }
.s1 { height: 110px; margin-bottom: 7px; }
.s2 { height: 143px; border-bottom: 2px solid #2a6a96; }
.s3 { flex: 1; }
.main { grid-area: 1 / 2; padding: 97px 0 0 10px; overflow: hidden; }
.crow { display: flex; gap: 8px; height: 211px; }
.crow .last { margin-top: -1px; margin-left: -5px; }
.c2 { gap: 18px; }
.chart { background: #deebf7; box-shadow: 0 0 8px 9px #3182bd; fill: #3a7fb5; font-size: 12px; text-anchor: middle; overflow: hidden; position: relative; }
.chart + .chart { clip-path: inset(-20px -20px -20px -3px); }
.c2 .chart + .chart { clip-path: inset(-20px -20px -20px -12px); }
.t { font-size: 18px; }
.chart .e { text-anchor: end; }
.chart .s { text-anchor: start; }
.k { fill: #333; }
.cards { grid-area: 1 / 1 / 2 / 3; z-index: 3; display: flex; gap: 12px; padding: 7px 0 0 22px; height: 95px; align-self: start; align-items: flex-start; }
.card { background: #deebf7; border: 1px solid #3a7fb5; border-radius: 12px; height: 64px; width: 164px; display: flex; flex-direction: column; padding: 8px 0 0 12px; font-size: 18px; line-height: 24px; white-space: nowrap; flex: none; }
.card b { font-weight: 400; padding-left: 8px; line-height: 28px; }
.k1, .k2 { margin-top: 10px; } .k3, .k4 { margin-top: 8px; }
.k1 { width: 181px; margin-left: 2px; } .k1 b { padding-left: 22px; }
.k3 b, .k4 b { line-height: 24px; } .k4 b { font-size: 14px; }
.k4 { margin-left: -4px; }
.head { width: 206px; height: 85px; position: relative; border-left-color: #deebf7; }
.head p { margin: 0; width: 170px; white-space: normal; }
.head svg { position: absolute; left: 63px; top: 36px; }
.depi { font: 10px "DejaVu Sans", sans-serif; fill: #333; text-anchor: middle; }

/* Sheet tabs */
.sheettabs { height: 48px; flex: none; display: flex; align-items: flex-start; font-size: 20px; border-bottom: 1px solid #fff; padding-left: 14px; }
.nav { width: 49px; height: 46px; }
.st { padding: 4px 20px; line-height: 22px; margin-top: 10px; background: linear-gradient(#cfcfcf, #cfcfcf) right 0 / 1px 100% no-repeat; }
.first { margin-left: 47px; }
.cur { background: #fff; border: 1px solid #d4d4d4; border-top: 0; border-radius: 0 0 8px 8px; margin-left: 4px; height: 42px; padding: 0 11px; font-weight: 600; }
.cur span { display: block; line-height: 30px; height: 38px; border-bottom: 3px solid #1e7145; padding-top: 5px; }
.sheettabs .vs { height: 28px; align-self: flex-start; margin: 10px 0 0 6px; }
.add { height: 46px; margin-left: 62px; }
.sheettabs .dots { margin-left: auto; height: 46px; }
.hscroll { width: 710px; height: 26px; margin: 10px 29px 0 10px; border-radius: 13px; background: #f4f4f4; display: flex; align-items: center; justify-content: space-between; padding: 0 7px; }
.hscroll i { width: 453px; height: 12px; border-radius: 6px; background: #707070; margin-left: auto; margin-right: 10px; }

/* Status bar */
.status { height: 33px; flex: none; display: flex; align-items: center; background: #f4f4f4; font-size: 15px; padding: 0 20px 0 16px; }
.acc { font-weight: 600; gap: 5px; margin-left: 29px; }
.disp { gap: 3px; margin-left: auto; margin-right: 28px; }
.view { width: 60px; height: 33px; }
.view.on { background: #dedede; }
.zm { width: 28px; }
.zoom { appearance: none; width: 148px; height: 20px; margin: 0; background: linear-gradient(#666, #666) 0 50% / 100% 2px no-repeat, linear-gradient(#666, #666) 50% 50% / 2px 10px no-repeat; }
.zoom::-webkit-slider-thumb { appearance: none; width: 8px; height: 17px; background: #555; }
.pct { width: 42px; text-align: right; }

/* Taskbar */
.taskbar { height: 60px; flex: none; display: flex; align-items: stretch; position: relative; background: radial-gradient(ellipse at 12% 30%, #1b1b1b, transparent 25%), radial-gradient(ellipse at 60% 10%, #161616, transparent 30%), #090909; color: #fff; }
.tb { width: 61px; border: 0; border-bottom: 3px solid #76b0e0; background: none; padding: 0; margin-right: 14px; display: flex; align-items: center; justify-content: center; }
.nb { border-color: transparent; width: 72px; margin: 0; }
.tv { margin-right: 11px; }
.km { border-bottom-color: #f8ec14; background: linear-gradient(to right, #6e6414 6px, #2a2a2a 6px); }
.xl { width: 73px; background: #3c3c3c; margin-right: 8px; }
.km + .tb { margin-right: 8px; }
.tray { margin-left: auto; display: flex; align-items: center; gap: 15px; padding-right: 6px; font-size: 17px; }
time { font-size: 18px; line-height: 28px; text-align: center; margin-left: 5px; }
.note { position: relative; margin-left: 9px; height: 60px; border-right: 1px solid #666; width: 60px; padding-right: 30px; padding-bottom: 4px; }
.note b { position: absolute; left: 15px; top: 30px; width: 25px; height: 25px; border: 1px solid #999; border-radius: 50%; background: #262626; font-size: 15px; line-height: 23px; }
.mark { position: absolute; left: 44%; bottom: 8px; font: 700 63px/72px "DejaVu Sans", sans-serif; color: rgba(140, 140, 140, .55); }
```
